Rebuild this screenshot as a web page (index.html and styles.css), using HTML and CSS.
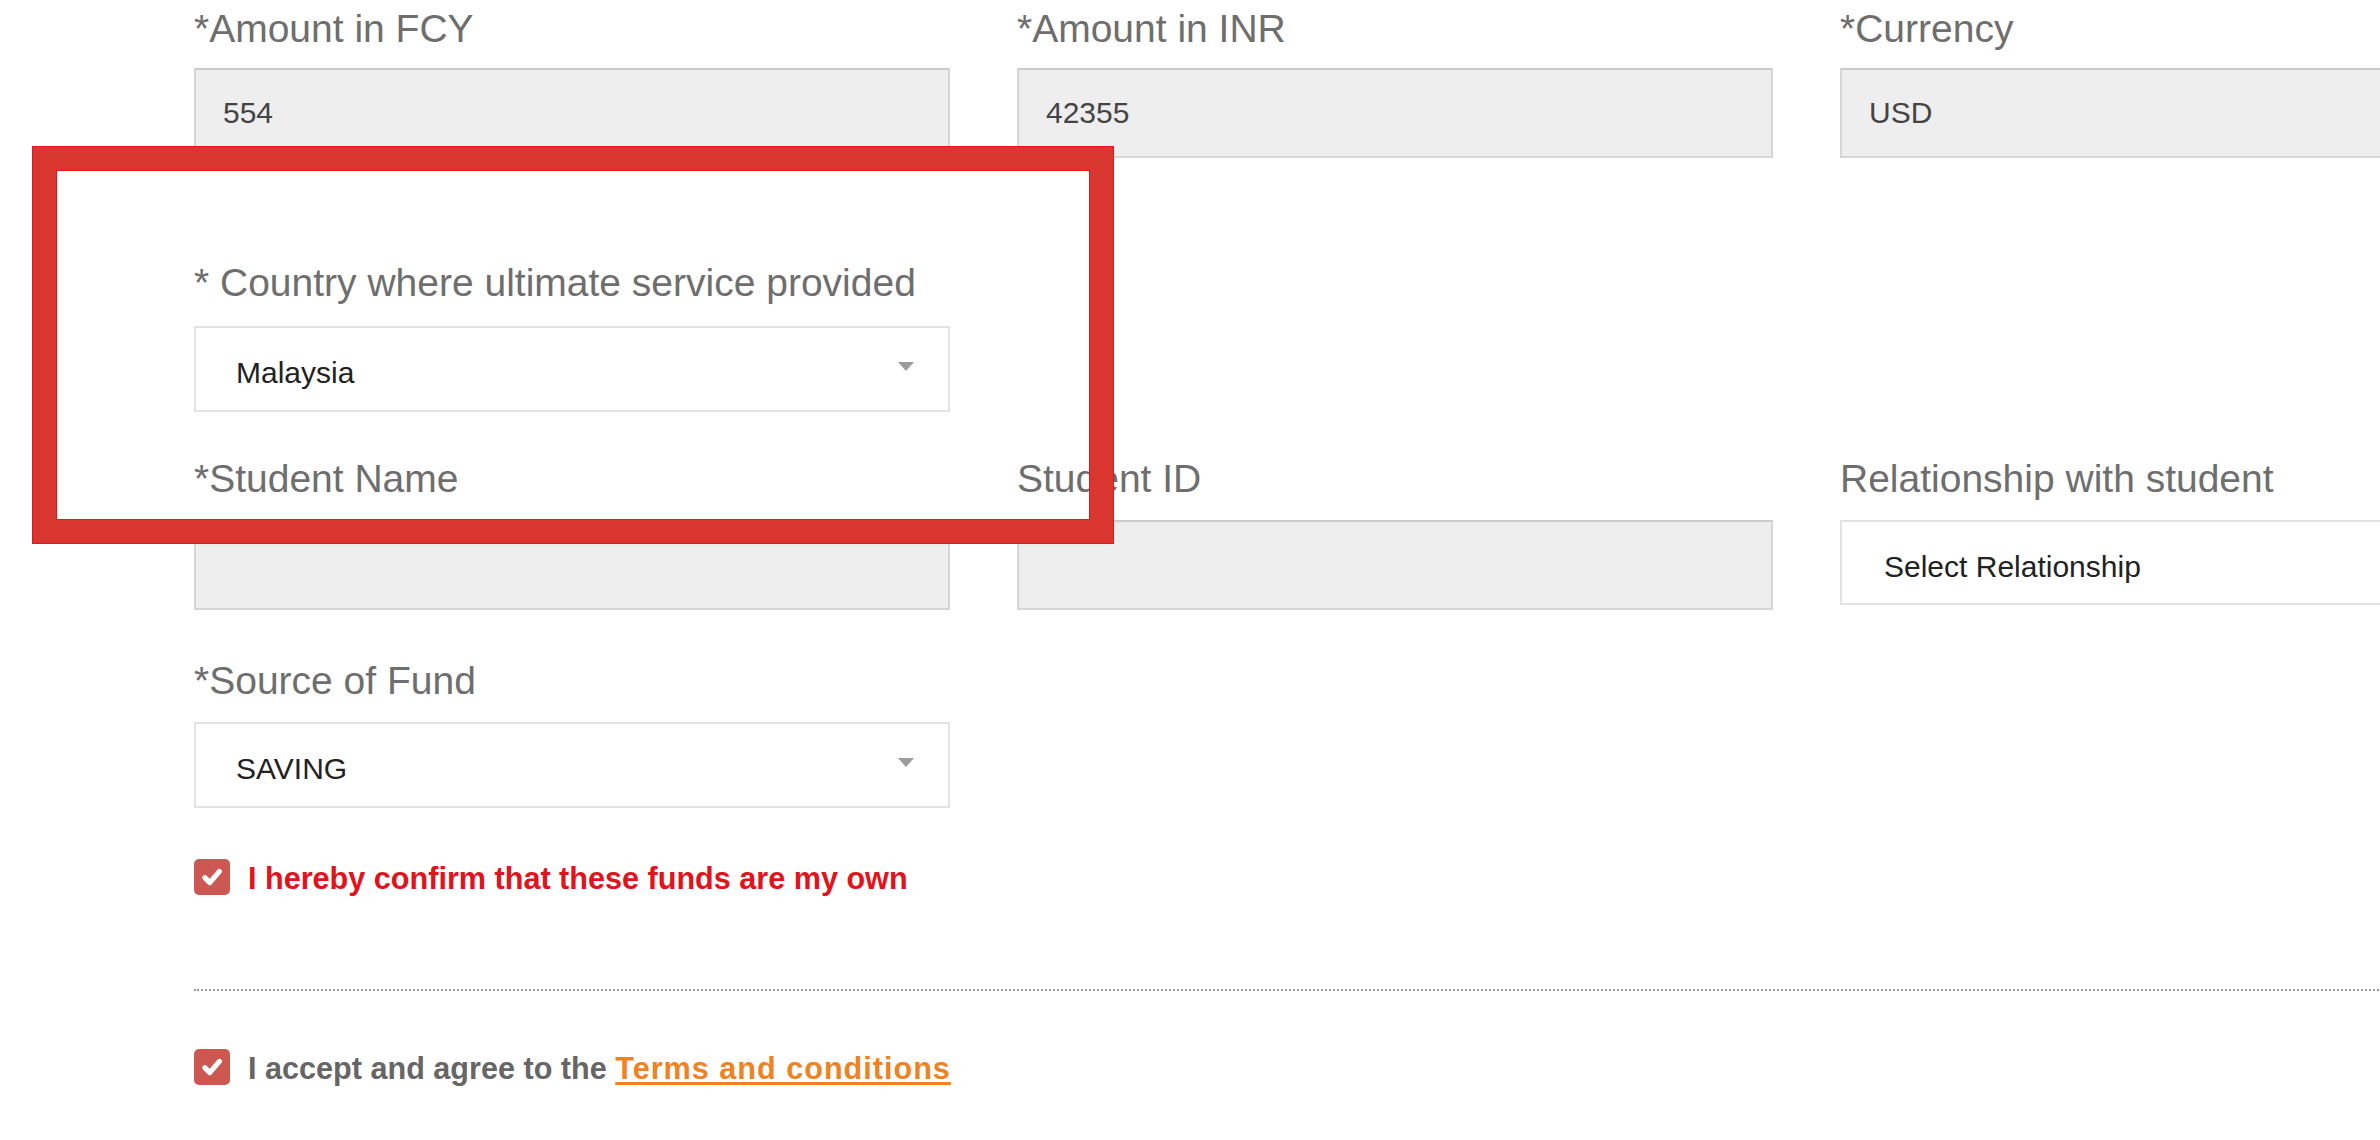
FILE: index.html
```html
<!DOCTYPE HTML>
<html>
<head>
<meta charset="utf-8">
<title>Remittance details</title>
<link rel="stylesheet" href="styles.css">
</head>

<body>
<div class="page">
	<div class="form">
		<div class="row row-first">
			<div class="field">
				<label>*Amount in FCY</label>
				<div class="input">554</div>
			</div>
			<div class="field">
				<label>*Amount in INR</label>
				<div class="input">42355</div>
			</div>
			<div class="field">
				<label>*Currency</label>
				<div class="input">USD</div>
			</div>
		</div>

		<div class="row row-country">
			<div class="field">
				<label>* Country where ultimate service provided</label>
				<div class="select">Malaysia<i class="caret"></i></div>
			</div>
		</div>

		<div class="row row-student">
			<div class="field">
				<label>*Student Name</label>
				<div class="input"></div>
			</div>
			<div class="field">
				<label>Student ID</label>
				<div class="input"></div>
			</div>
			<div class="field">
				<label>Relationship with student</label>
				<div class="select select-rel">Select Relationship</div>
			</div>
		</div>

		<div class="row row-fund">
			<div class="field">
				<label>*Source of Fund</label>
				<div class="select">SAVING<i class="caret"></i></div>
			</div>
		</div>

		<div class="check-row check-own">
			<span class="check"><svg viewBox="0 0 20 20" width="26" height="26"><path d="M4.5 10.5l3.8 3.8 7.4-8.6" fill="none" stroke="#fff" stroke-width="4" stroke-linecap="round" stroke-linejoin="round"/></svg></span>
			<span class="check-text warn">I hereby confirm that these funds are my own</span>
		</div>

		<div class="divider"></div>

		<div class="check-row check-terms">
			<span class="check"><svg viewBox="0 0 20 20" width="26" height="26"><path d="M4.5 10.5l3.8 3.8 7.4-8.6" fill="none" stroke="#fff" stroke-width="4" stroke-linecap="round" stroke-linejoin="round"/></svg></span>
			<span class="check-text">I accept and agree to the <a href="javascript:;">Terms and conditions</a></span>
		</div>
	</div>

	<!-- annotation frame drawn over the form -->
	<div class="mark"></div>
</div>
</body>
</html>
```

FILE: styles.css
```css
* {margin:0; padding:0; box-sizing:border-box;}
html, body {width:2380px; height:1140px; overflow:hidden; background:#fff;}
body {font-family:"Liberation Sans", Arial, sans-serif;}

.page {position:relative; width:2380px; height:1140px; overflow:hidden;}
.form {width:2600px; padding:5px 0 0 194px;}

.row {display:grid; grid-template-columns:756px 756px 756px; column-gap:67px;}
.row-country {margin-top:101px;}
.row-student {margin-top:43px;}
.row-fund {margin-top:47px;}

.field label {display:block; font-size:39px; line-height:47px; color:#6e6e6e; margin-bottom:18px; white-space:nowrap;}
.row-first .field label {margin-bottom:16px;}
.row-country .field label {margin-bottom:20px;}

.input {height:90px; background:#eee; border:2px solid #d6d6d6; border-top-color:#cbcbcb; padding:0 27px; font-size:30px; line-height:86px; color:#444;}
.select {position:relative; height:86px; background:#fff; border:2px solid #e2e2e2; padding:8px 40px 0; font-size:30px; line-height:74px; color:#222;}
.select-rel {margin-top:2px; height:85px; padding-left:42px;}
.caret {position:absolute; right:34px; top:34px; width:0; height:0; border-left:8px solid transparent; border-right:8px solid transparent; border-top:9px solid #9c9c9c;}

.check-row {display:flex; align-items:center; gap:18px; height:36px;}
.check-own {margin-top:51px;}
.check-terms {margin-top:58px;}
.check {display:flex; align-items:center; justify-content:center; width:36px; height:36px; border-radius:5px; background:#cd5852;}
.check-text {font-size:30.6px; font-weight:bold; color:#666; white-space:nowrap; position:relative; top:1px;}
.check-text.warn {color:#e3121b;}
.check-text a {color:#ef8223; text-decoration:underline; text-underline-offset:3px; letter-spacing:1px;}

.divider {margin-top:94px; border-top:2px dotted #999; width:2200px;}

.mark {position:absolute; left:33px; top:147px; width:1080px; height:396px; border:23px solid #d9362f; box-shadow:0 0 0 1px #e8161b, inset 0 0 0 1px #e8161b;}
```
